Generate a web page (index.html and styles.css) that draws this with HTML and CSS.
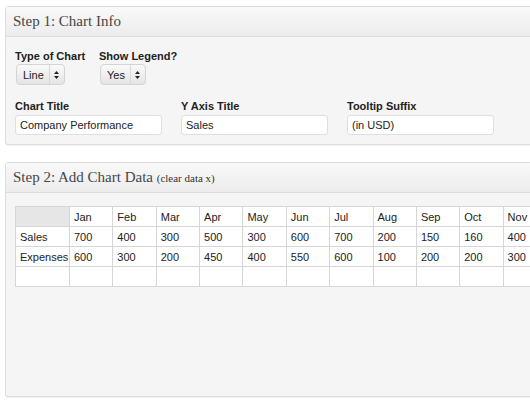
FILE: index.html
```html
<!DOCTYPE html>
<html>
<head>
<meta charset="utf-8">
<link rel="stylesheet" href="styles.css">
</head>
<body>
<div class="page">
  <section class="panel panel-info">
    <h3 class="panel-head">Step 1: Chart Info</h3>
    <div class="panel-body">
      <div class="row row-selects">
        <div class="field field-type">
          <label class="lbl">Type of Chart</label>
          <div class="select"><span class="sel-val">Line</span><span class="sel-arrows"><svg width="5" height="8" viewBox="0 0 5 8"><path d="M2.5 0L5 3H0z M2.5 8L5 5H0z" fill="#222"/></svg></span></div>
        </div>
        <div class="field field-legend">
          <label class="lbl">Show Legend?</label>
          <div class="select"><span class="sel-val">Yes</span><span class="sel-arrows"><svg width="5" height="8" viewBox="0 0 5 8"><path d="M2.5 0L5 3H0z M2.5 8L5 5H0z" fill="#222"/></svg></span></div>
        </div>
      </div>
      <div class="row row-inputs">
        <div class="field field-text">
          <label class="lbl">Chart Title</label>
          <div class="input">Company Performance</div>
        </div>
        <div class="field field-text">
          <label class="lbl">Y Axis Title</label>
          <div class="input">Sales</div>
        </div>
        <div class="field field-text">
          <label class="lbl">Tooltip Suffix</label>
          <div class="input">(in USD)</div>
        </div>
      </div>
    </div>
  </section>

  <section class="panel panel-data">
    <h3 class="panel-head">Step 2: Add Chart Data <span class="clear">(clear data x)</span></h3>
    <div class="panel-body body-data">
      <table class="grid">
        <colgroup><col class="c-first"><col class="c-m"><col class="c-m"><col class="c-m"><col class="c-m"><col class="c-m"><col class="c-m"><col class="c-m"><col class="c-m"><col class="c-m"><col class="c-m"><col class="c-m"></colgroup>
        <tr><td class="corner"></td><td>Jan</td><td>Feb</td><td>Mar</td><td>Apr</td><td>May</td><td>Jun</td><td>Jul</td><td>Aug</td><td>Sep</td><td>Oct</td><td>Nov</td></tr>
        <tr><td>Sales</td><td>700</td><td>400</td><td>300</td><td>500</td><td>300</td><td>600</td><td>700</td><td>200</td><td>150</td><td>160</td><td>400</td></tr>
        <tr><td>Expenses</td><td>600</td><td>300</td><td>200</td><td>450</td><td>400</td><td>550</td><td>600</td><td>100</td><td>200</td><td>200</td><td>300</td></tr>
        <tr><td></td><td></td><td></td><td></td><td></td><td></td><td></td><td></td><td></td><td></td><td></td><td></td></tr>
      </table>
    </div>
  </section>
</div>
</body>
</html>
```
FILE: styles.css
```css
html, body {
  margin: 0;
  padding: 0;
  background: #fff;
  overflow: hidden;
  width: 530px;
  height: 400px;
}
.page {
  padding: 6px 0 0 5px;
  display: flex;
  flex-direction: column;
  gap: 17px;
  width: 560px;
  font-family: "Liberation Sans", Arial, sans-serif;
  color: #222;
}
.panel {
  background: #f5f5f5;
  border: 1px solid #dcdcdc;
  border-radius: 3px;
  box-shadow: 0 1px 1px rgba(0,0,0,0.06);
}
.panel-head {
  margin: 0;
  height: 30px;
  box-sizing: border-box;
  padding: 6px 0 0 7px;
  font-family: "Liberation Serif", "Times New Roman", serif;
  font-weight: normal;
  font-size: 15px;
  color: #464646;
  background: linear-gradient(#f9f9f9, #ececec);
  border-bottom: 1px solid #dcdcdc;
}
.clear {
  font-size: 11px;
  color: #333;
}
.panel-body {
  padding: 12px 0 9px 9px;
}
.row {
  display: flex;
}
.row-selects {
  margin-bottom: 14px;
}
.field {
  display: flex;
  flex-direction: column;
}
.field-type { width: 84px; }
.field-legend { width: 100px; }
.lbl {
  font-size: 11px;
  font-weight: bold;
  color: #222;
  line-height: 14px;
  margin-bottom: 1px;
}
.select {
  display: flex;
  align-items: center;
  width: fit-content;
  height: 21px;
  box-sizing: border-box;
  margin-left: 1px;
  background: linear-gradient(#fafafa, #e4e4e4);
  border: 1px solid #d4d4d4;
  border-radius: 4px;
  font-size: 11px;
  color: #222;
}
.sel-val {
  padding: 0 5px 0 6px;
}
.sel-arrows {
  display: flex;
  align-items: center;
  height: 100%;
  padding: 0 5px 0 4px;
  border-left: 1px solid #d8d8d8;
}
.row-inputs {
  gap: 19px;
}
.field-text .lbl { margin-bottom: 2px; }
.input {
  width: 147px;
  height: 20px;
  box-sizing: border-box;
  background: #fff;
  border: 1px solid #dfdfdf;
  border-radius: 3px;
  font-size: 11px;
  line-height: 18px;
  padding-left: 4px;
  color: #222;
}
.body-data {
  padding: 13px 0 109px 9px;
}
.grid {
  border-collapse: collapse;
  table-layout: fixed;
  width: 531px;
  background: #fff;
  font-size: 11px;
  color: #222;
}
.c-first { width: 54px; }
.c-m { width: 43.36px; }
.grid td {
  border: 1px solid #d6d6d6;
  height: 19px;
  padding: 0 0 0 4px;
  white-space: nowrap;
  overflow: hidden;
}
.grid td.corner {
  background: #e6e6e6;
}
```
